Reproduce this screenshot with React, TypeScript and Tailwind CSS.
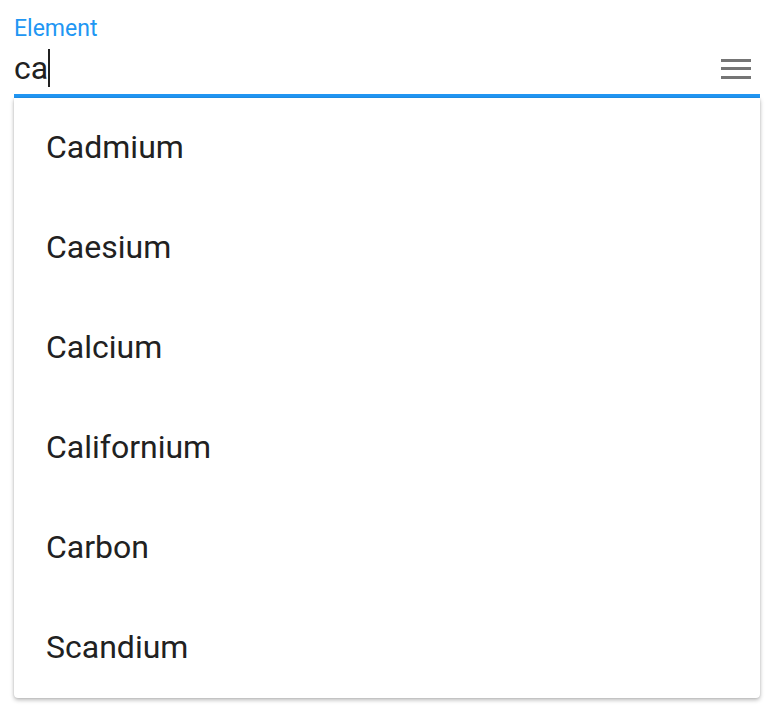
const ELEMENTS = ['Cadmium', 'Caesium', 'Calcium', 'Californium', 'Carbon', 'Scandium']

export default function App() {
  return (
    <div className="w-[774px] h-[720px] bg-white font-['Roboto',sans-serif]">
      <div className="flex flex-col pl-[14px] pr-[14px] pt-[15px]">
        {/* label + input */}
        <label className="text-[23px] leading-[27px] text-[#2196f3]">Element</label>
        <div className="flex flex-row items-center h-[56px] border-b-[4px] border-[#2196f3]">
          <div className="flex flex-row items-center flex-1">
            <span className="text-[32px] leading-[38px] text-[#212121]">ca</span>
            <span className="w-[2px] h-[38px] bg-[#212121]" />
          </div>
          <svg width="30" height="20" viewBox="0 0 30 20" className="mr-[9px] mt-[2px]">
            <rect x="0" y="0" width="30" height="3" fill="#757575" />
            <rect x="0" y="8" width="30" height="3" fill="#757575" />
            <rect x="0" y="17" width="30" height="3" fill="#757575" />
          </svg>
        </div>
        {/* suggestion list */}
        <ul className="flex flex-col bg-white rounded-b-[4px] shadow-[0_2px_4px_rgba(0,0,0,0.28),0_0_2px_rgba(0,0,0,0.12)]">
          {ELEMENTS.map((name) => (
            <li key={name} className="flex items-center h-[100px] pl-[32px] pb-[2px] text-[32px] text-[#212121]">
              {name}
            </li>
          ))}
        </ul>
      </div>
    </div>
  )
}
